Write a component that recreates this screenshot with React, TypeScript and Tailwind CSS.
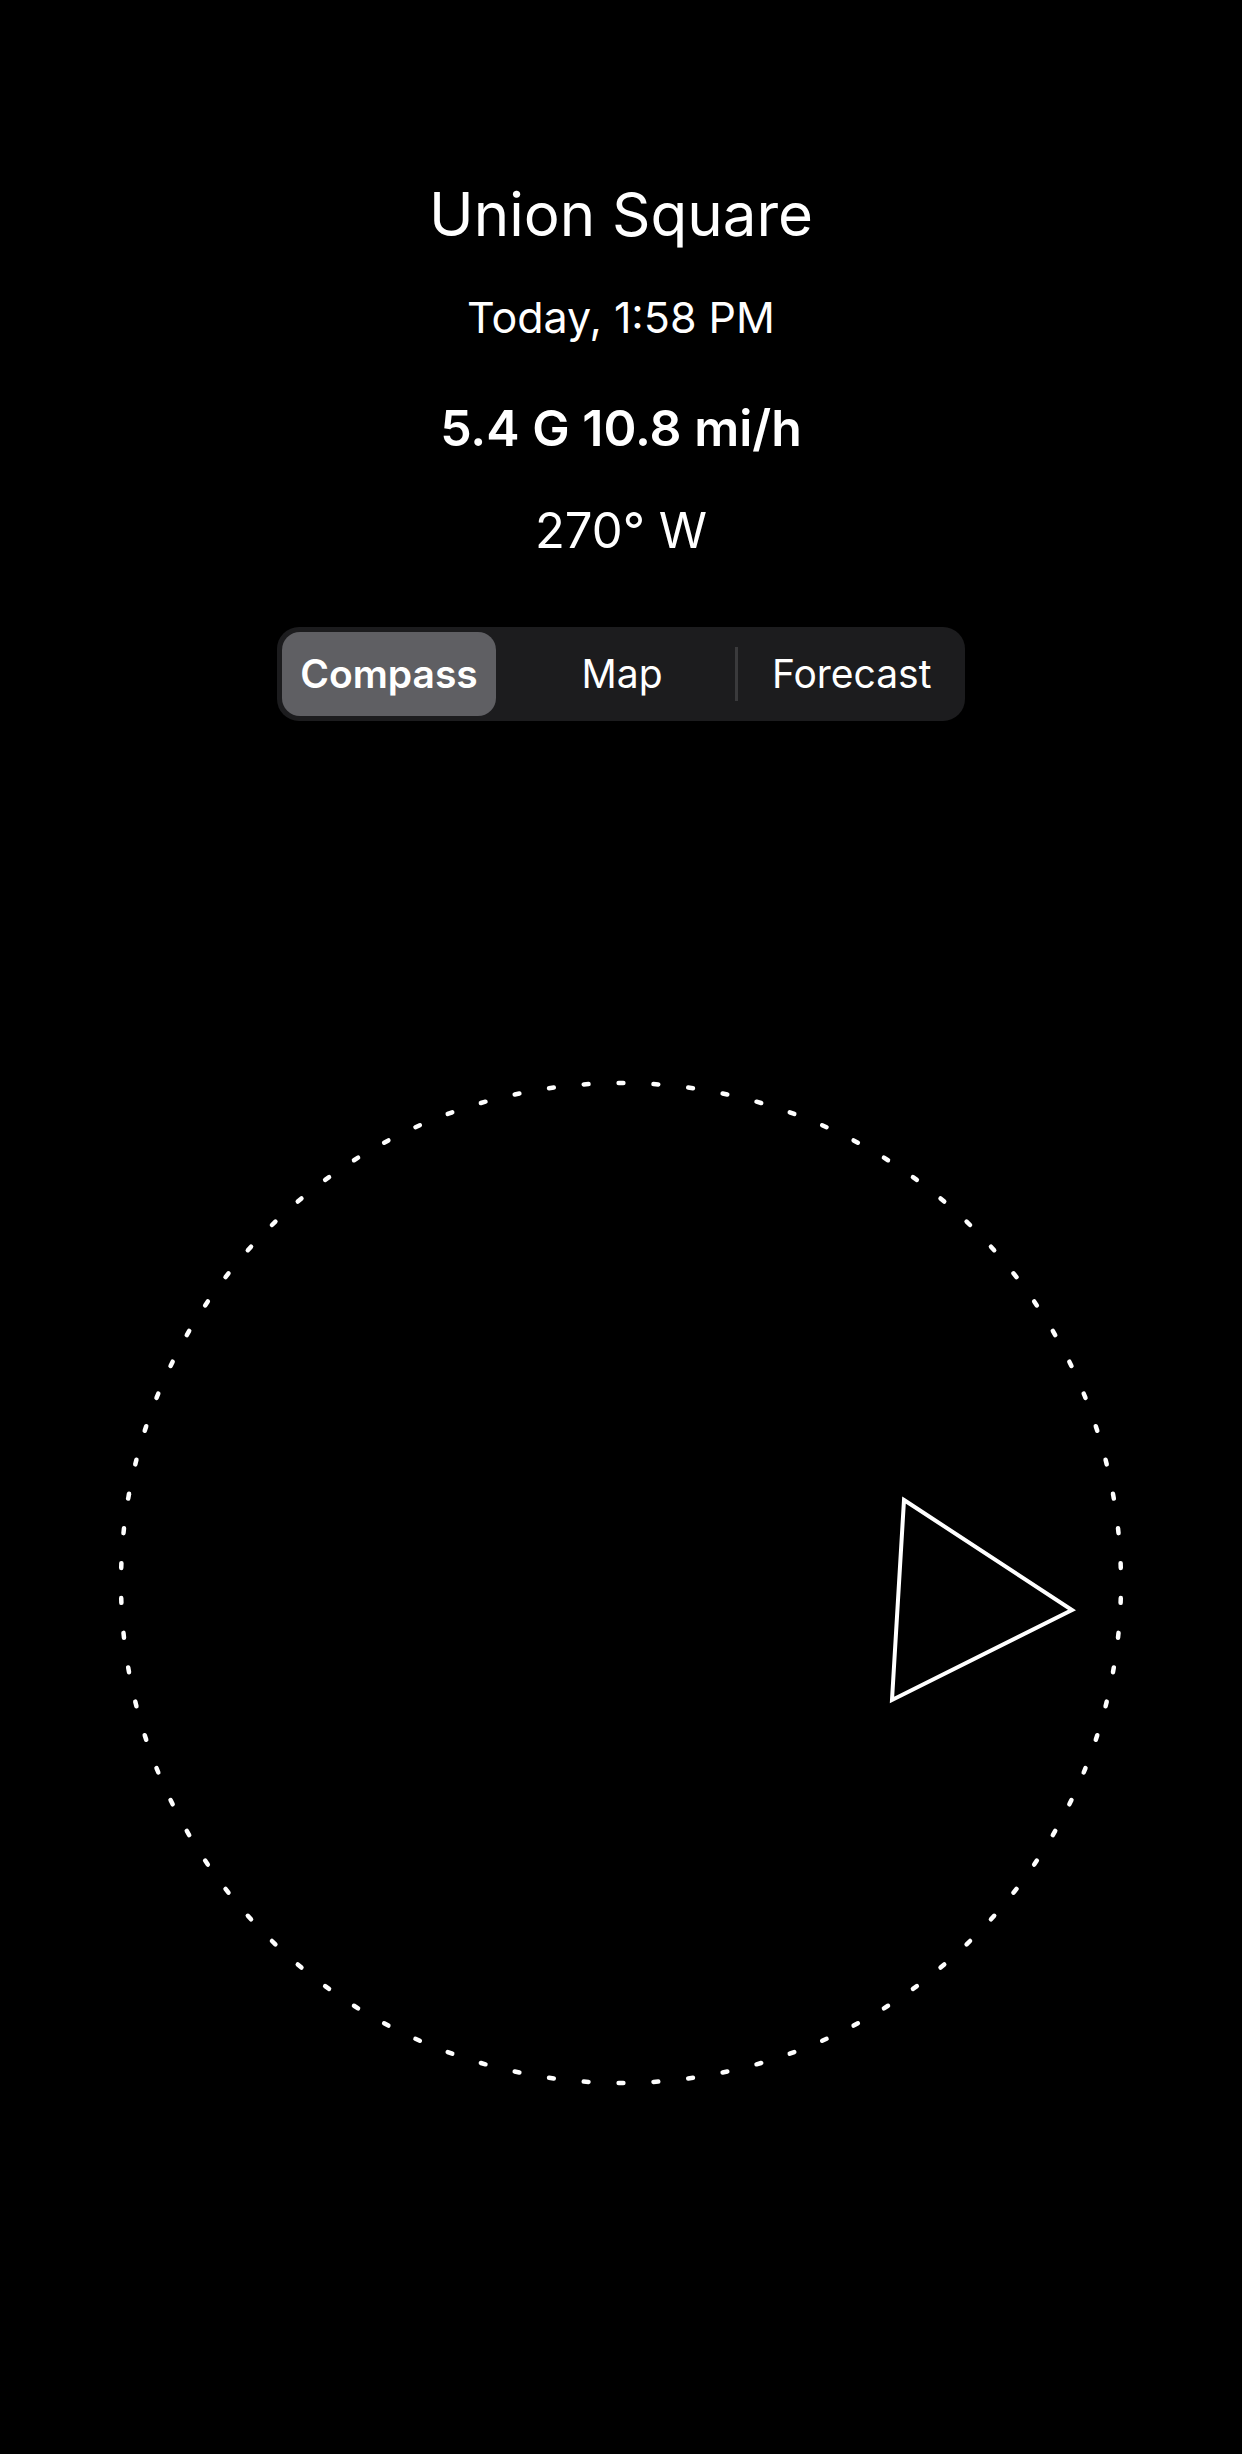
import React from "react";

const dots = Array.from({ length: 90 }, (_, i) => {
  const a = ((2 + 4 * i) * Math.PI) / 180;
  const r = 500;
  const cx = 505 + r * Math.cos(a);
  const cy = 505 - r * Math.sin(a);
  const tx = -Math.sin(a);
  const ty = -Math.cos(a);
  const h = 2.4;
  return { x1: cx - tx * h, y1: cy - ty * h, x2: cx + tx * h, y2: cy + ty * h };
});

export default function App() {
  return (
    <div
      className="w-[1242px] h-[2454px] bg-black text-white flex flex-col items-center"
      style={{ fontFamily: "Inter, 'Noto Sans', sans-serif" }}
    >
      <div className="mt-[176px] text-[60px] leading-[76px] font-normal">Union Square</div>
      <div className="mt-[39px] text-[43px] leading-[52px]">Today, 1:58 PM</div>
      <div className="mt-[55px] text-[50px] leading-[60px] font-semibold">5.4 G 10.8 mi/h</div>
      <div className="mt-[44px] text-[49px] leading-[58px]">270° W</div>

      <div className="mt-[67px] w-[688px] h-[94px] rounded-[22px] bg-[#1c1c1e] flex items-stretch relative">
        <div className="flex-1 flex items-center justify-start pl-[5px]">
          <div className="w-[214px] h-[84px] rounded-[18px] bg-[#5f5f63] flex items-center justify-center text-[39px] font-semibold">
            Compass
          </div>
        </div>
        <div className="flex-1 flex items-center justify-center text-[39px]">Map</div>
        <div className="w-[3px] self-center h-[54px] bg-[#3a3a3c]" />
        <div className="flex-1 flex items-center justify-center text-[39px]">Forecast</div>
      </div>

      <svg className="mt-[357px]" width="1010" height="1010" viewBox="0 0 1010 1010">
        {dots.map((d, i) => (
          <line
            key={i}
            x1={d.x1}
            y1={d.y1}
            x2={d.x2}
            y2={d.y2}
            stroke="white"
            strokeWidth={4.5}
            strokeLinecap="round"
          />
        ))}
        <polygon
          points="788,422 956,532 776,622"
          fill="none"
          stroke="white"
          strokeWidth={4}
          strokeLinejoin="miter"
        />
      </svg>
    </div>
  );
}
